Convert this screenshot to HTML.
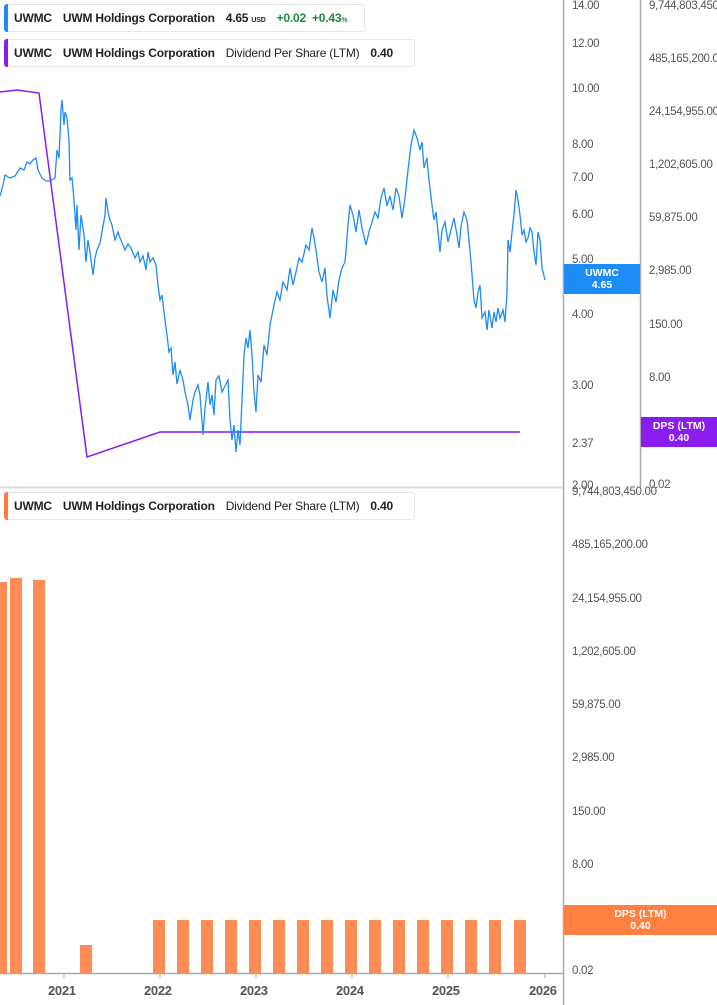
<!DOCTYPE html>
<html><head><meta charset="utf-8"><style>
body{margin:0;width:717px;height:1005px;background:#fff;overflow:hidden;font-family:"Liberation Sans",Arial,sans-serif;position:relative}
.leg{position:absolute;left:4px;height:26px;background:#fff;border:1px solid #e6e6e6;border-radius:3px;font-size:12px;font-weight:bold;color:#222;line-height:26px;padding-left:9px;white-space:nowrap;letter-spacing:-0.2px}
.leg:before{content:"";position:absolute;left:-1px;top:-1px;bottom:-1px;width:4px;border-radius:3px 0 0 3px;background:var(--c)}
.leg span{margin-right:11px}
.n{font-weight:normal}
.ax{position:absolute;font-size:11.5px;color:#555;letter-spacing:-0.3px}
.tag{position:absolute;color:#fff;font-size:10.5px;font-weight:bold;text-align:center;line-height:12px}
</style></head><body>
<svg width="717" height="1005" style="position:absolute;left:0;top:0">
<line x1="0" y1="487.5" x2="563" y2="487.5" stroke="#ddd" stroke-width="2"/>
<line x1="563.5" y1="0" x2="563.5" y2="1005" stroke="#aaa" stroke-width="1.5"/>
<line x1="640.5" y1="0" x2="640.5" y2="487" stroke="#aaa" stroke-width="1.5"/>
<line x1="0" y1="973.5" x2="563" y2="973.5" stroke="#aaa" stroke-width="1.5"/>
<g stroke="#aaa"><line x1="64" y1="973" x2="64" y2="978"/><line x1="160" y1="973" x2="160" y2="978"/><line x1="256" y1="973" x2="256" y2="978"/><line x1="352" y1="973" x2="352" y2="978"/><line x1="448" y1="973" x2="448" y2="978"/><line x1="545" y1="973" x2="545" y2="978"/></g>
<polyline fill="none" stroke="#8a1cf0" stroke-width="1.5" points="0,92 17,90 39,93 87,457 160,432 520,432"/>
<polyline fill="none" stroke="#1e8cf5" stroke-width="1.3" points="0,196 3,185 5,175 10,178 15,176 20,168 24,170 27,162 30,164 33,160 36,158 38,170 42,178 46,181 50,181 55,178 57,150 59,158 61,110 62,100 64,125 65,112 67,118 69,140 70,180 72,178 74,200 76,230 77,205 79,250 81,215 84,235 86,262 88,240 90,252 93,275 95,258 97,250 100,243 102,232 105,215 106,198 108,212 110,220 112,225 115,240 118,232 120,238 125,250 128,244 131,248 135,258 138,252 140,262 143,256 146,270 148,252 150,262 153,258 156,265 158,285 160,300 162,295 165,320 167,335 169,352 171,348 173,375 175,362 177,384 180,370 183,380 185,392 188,405 190,420 193,400 195,392 198,385 200,395 203,435 205,408 208,382 210,405 212,395 214,415 216,380 219,376 222,392 225,386 228,380 230,420 232,440 234,425 236,452 238,430 240,445 242,400 244,355 246,338 248,348 250,330 252,355 254,392 256,412 258,375 261,382 264,345 267,355 270,325 274,305 277,292 280,300 283,282 287,290 290,268 293,285 296,272 299,258 302,262 306,245 309,250 312,228 314,238 316,250 319,272 322,282 325,268 327,296 330,318 333,290 336,302 339,280 342,268 345,262 348,225 350,205 353,215 356,232 359,210 362,228 366,245 369,232 372,222 375,212 378,218 381,198 384,188 387,206 390,196 393,210 396,188 399,196 402,218 405,198 408,170 411,145 414,130 417,138 420,150 422,142 424,168 427,158 429,180 432,205 434,220 436,212 438,232 440,252 442,230 445,222 448,242 451,230 454,218 457,235 459,248 461,226 464,212 467,220 469,240 471,262 474,300 476,308 478,292 480,285 482,318 485,312 487,330 489,310 492,328 494,312 496,322 498,308 500,318 503,310 505,322 507,292 508,240 510,252 512,232 514,215 516,190 518,200 520,215 522,235 524,230 526,242 528,238 530,228 532,232 534,252 536,265 538,232 540,240 542,268 545,280"/>
<g fill="#ff8c55">
<rect x="0" y="582" width="7" height="391"/><rect x="10" y="578" width="12" height="395"/><rect x="33" y="580" width="12" height="393"/><rect x="80" y="945" width="12" height="28"/>
<rect x="153" y="920" width="12" height="53"/><rect x="177" y="920" width="12" height="53"/><rect x="201" y="920" width="12" height="53"/><rect x="225" y="920" width="12" height="53"/><rect x="249" y="920" width="12" height="53"/><rect x="273" y="920" width="12" height="53"/><rect x="297" y="920" width="12" height="53"/><rect x="321" y="920" width="12" height="53"/><rect x="345" y="920" width="12" height="53"/><rect x="369" y="920" width="12" height="53"/><rect x="393" y="920" width="12" height="53"/><rect x="417" y="920" width="12" height="53"/><rect x="441" y="920" width="12" height="53"/><rect x="465" y="920" width="12" height="53"/><rect x="489" y="920" width="12" height="53"/><rect x="514" y="920" width="12" height="53"/>
</g>
</svg>
<div class="leg" style="--c:#1e8cf5;top:4px;width:350px"><span>UWMC</span><span>UWM Holdings Corporation</span><span>4.65 <small style="font-size:7px">USD</small></span><span style="color:#1a8a3a;margin-right:6px">+0.02</span><span style="color:#1a8a3a">+0.43<small style="font-size:7px">%</small></span></div>
<div class="leg" style="--c:#8a1cf0;top:39px;width:400px"><span>UWMC</span><span>UWM Holdings Corporation</span><span class="n">Dividend Per Share (LTM)</span><span>0.40</span></div>
<div class="leg" style="--c:#ff7a3d;top:492px;width:400px"><span>UWMC</span><span>UWM Holdings Corporation</span><span class="n">Dividend Per Share (LTM)</span><span>0.40</span></div>
<div class="ax" style="left:572px;top:0">14.00</div>
<div class="ax" style="left:572px;top:38px">12.00</div>
<div class="ax" style="left:572px;top:83px">10.00</div>
<div class="ax" style="left:572px;top:139px">8.00</div>
<div class="ax" style="left:572px;top:172px">7.00</div>
<div class="ax" style="left:572px;top:209px">6.00</div>
<div class="ax" style="left:572px;top:254px">5.00</div>
<div class="ax" style="left:572px;top:309px">4.00</div>
<div class="ax" style="left:572px;top:380px">3.00</div>
<div class="ax" style="left:572px;top:438px">2.37</div>
<div class="ax" style="left:572px;top:480px">2.00</div>
<div class="ax" style="left:649px;top:0">9,744,803,450.00</div>
<div class="ax" style="left:649px;top:53px">485,165,200.00</div>
<div class="ax" style="left:649px;top:106px">24,154,955.00</div>
<div class="ax" style="left:649px;top:159px">1,202,605.00</div>
<div class="ax" style="left:649px;top:212px">59,875.00</div>
<div class="ax" style="left:649px;top:265px">2,985.00</div>
<div class="ax" style="left:649px;top:319px">150.00</div>
<div class="ax" style="left:649px;top:372px">8.00</div>
<div class="ax" style="left:649px;top:479px">0.02</div>
<div class="tag" style="left:564px;top:264px;width:76px;height:30px;background:#1e8cf5;padding-top:3px;box-sizing:border-box">UWMC<br>4.65</div>
<div class="tag" style="left:641px;top:417px;width:76px;height:30px;background:#8a1cf0;padding-top:3px;box-sizing:border-box">DPS (LTM)<br>0.40</div>
<div class="ax" style="left:572px;top:486px">9,744,803,450.00</div>
<div class="ax" style="left:572px;top:539px">485,165,200.00</div>
<div class="ax" style="left:572px;top:593px">24,154,955.00</div>
<div class="ax" style="left:572px;top:646px">1,202,605.00</div>
<div class="ax" style="left:572px;top:699px">59,875.00</div>
<div class="ax" style="left:572px;top:752px">2,985.00</div>
<div class="ax" style="left:572px;top:806px">150.00</div>
<div class="ax" style="left:572px;top:859px">8.00</div>
<div class="ax" style="left:572px;top:965px">0.02</div>
<div class="tag" style="left:564px;top:905px;width:153px;height:30px;background:#ff8040;padding-top:3px;box-sizing:border-box">DPS (LTM)<br>0.40</div>
<div class="ax" style="left:48px;top:983px;font-weight:bold;font-size:13px">2021</div>
<div class="ax" style="left:144px;top:983px;font-weight:bold;font-size:13px">2022</div>
<div class="ax" style="left:240px;top:983px;font-weight:bold;font-size:13px">2023</div>
<div class="ax" style="left:336px;top:983px;font-weight:bold;font-size:13px">2024</div>
<div class="ax" style="left:432px;top:983px;font-weight:bold;font-size:13px">2025</div>
<div class="ax" style="left:529px;top:983px;font-weight:bold;font-size:13px">2026</div>
</body></html>
